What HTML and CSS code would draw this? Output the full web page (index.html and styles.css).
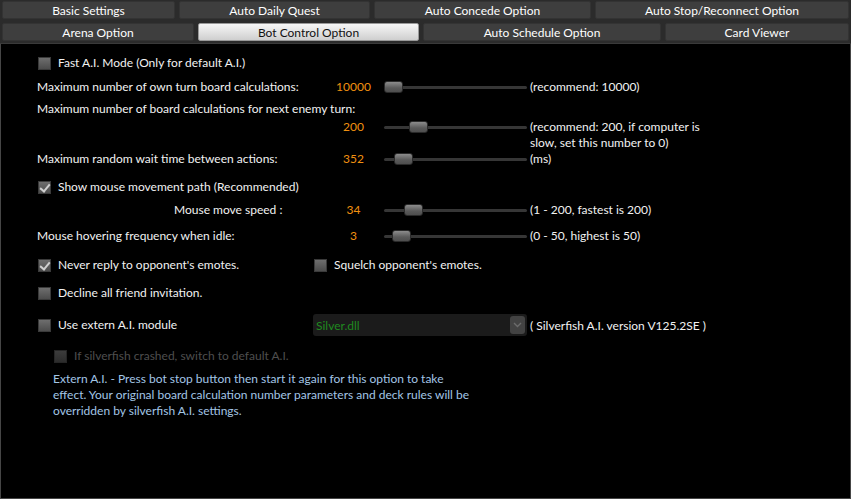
FILE: index.html
```html
<!DOCTYPE html>
<html lang="en">
<head>
  <meta charset="UTF-8">
  <title>Bot Control Option</title>
  <link rel="stylesheet" href="styles.css">
</head>
<body>
  <div class="window">
    <div class="tabs">
      <div class="tab-row">
        <div class="tab" style="width:173px">Basic Settings</div>
        <div class="tab" style="width:191px">Auto Daily Quest</div>
        <div class="tab" style="width:217px">Auto Concede Option</div>
        <div class="tab tab-last">Auto Stop/Reconnect Option</div>
      </div>
      <div class="tab-row">
        <div class="tab" style="width:192px">Arena Option</div>
        <div class="tab active" style="width:221px">Bot Control Option</div>
        <div class="tab" style="width:238px">Auto Schedule Option</div>
        <div class="tab tab-last">Card Viewer</div>
      </div>
    </div>

    <div class="panel">
      <label class="check row-fast"><span class="box"></span>Fast A.I. Mode (Only for default A.I.)</label>

      <div class="slider-row row-own">
        <span class="lbl">Maximum number of own turn board calculations:</span>
        <span class="val">10000</span>
        <span class="slider"><span class="thumb" style="left:0%"></span></span>
        <span class="note">(recommend: 10000)</span>
      </div>

      <div class="lbl-only">Maximum number of board calculations for next enemy turn:</div>
      <div class="slider-row row-enemy">
        <span class="lbl"></span>
        <span class="val">200</span>
        <span class="slider"><span class="thumb" style="left:17.5%"></span></span>
        <span class="note">(recommend: 200, if computer is<br>slow, set this number to 0)</span>
      </div>

      <div class="slider-row">
        <span class="lbl">Maximum random wait time between actions:</span>
        <span class="val">352</span>
        <span class="slider"><span class="thumb" style="left:7%"></span></span>
        <span class="note">(ms)</span>
      </div>

      <label class="check checked row-show"><span class="box"></span>Show mouse movement path (Recommended)</label>

      <div class="slider-row row-speed">
        <span class="lbl lbl-indent">Mouse move speed :</span>
        <span class="val">34</span>
        <span class="slider"><span class="thumb" style="left:14%"></span></span>
        <span class="note">(1 - 200, fastest is 200)</span>
      </div>

      <div class="slider-row row-hover">
        <span class="lbl">Mouse hovering frequency when idle:</span>
        <span class="val">3</span>
        <span class="slider"><span class="thumb" style="left:5.6%"></span></span>
        <span class="note">(0 - 50, highest is 50)</span>
      </div>

      <div class="pair row-never">
        <label class="check checked col-left"><span class="box"></span>Never reply to opponent's emotes.</label>
        <label class="check squelch"><span class="box"></span>Squelch opponent's emotes.</label>
      </div>

      <label class="check row-decline"><span class="box"></span>Decline all friend invitation.</label>

      <div class="pair row-extern">
        <label class="check col-left"><span class="box"></span>Use extern A.I. module</label>
        <div class="dropdown">
          <span class="dd-text">Silver.dll</span>
          <span class="dd-btn">
            <svg width="9" height="6" viewBox="0 0 9 6"><path d="M1 1 L4.5 4.5 L8 1" fill="none" stroke="#6c6c6c" stroke-width="1.4"/></svg>
          </span>
        </div>
        <span class="ver">( Silverfish A.I. version V125.2SE )</span>
      </div>

      <label class="check disabled row-crash"><span class="box"></span>If silverfish crashed, switch to default A.I.</label>

      <p class="info">Extern A.I. - Press bot stop button then start it again for this option to take effect. Your original board calculation number parameters and deck rules will be overridden by silverfish A.I. settings.</p>
    </div>
  </div>
</body>
</html>
```

FILE: styles.css
```css
body { margin: 0; background-color: #2b2b2b; font-family: Lato, "Liberation Sans", sans-serif; font-size: 12px; color: #f2f2f2; }
.window { width: 851px; height: 499px; display: flex; flex-direction: column; }

/* tab header */
.tabs { height: 44px; padding-top: 1px; box-sizing: border-box; border-bottom: 1px solid #3a3a3a; }
.tab-row { display: flex; gap: 4px; padding: 0 2px 0 2px; height: 18px; margin-bottom: 4px; }
.tab { height: 18px; line-height: 18px; text-align: center; background-color: #3e3e3e; border: 1px solid #333; border-radius: 2px; box-sizing: border-box; color: #fff; white-space: nowrap; }
.tab-last { flex: 1; }
.tab.active { background: linear-gradient(#f7f7f7, #cfcfcf); color: #111; border-color: #999; }

/* content */
.panel { flex: 1; background-color: #000; border: 1px solid #464646; border-top: none; padding: 11px 0 0 36px; }

.check { display: flex; align-items: center; height: 16px; line-height: 16px; white-space: nowrap; }
.box { width: 13px; height: 13px; margin: 0 7px 0 1px; box-sizing: border-box; border: 1px solid #3a3a3a; background: linear-gradient(#6e6e6e, #4c4c4c); position: relative; }
.checked .box::after { content: ""; position: absolute; left: 3px; top: 0px; width: 4px; height: 8px; border: solid #cfcfcf; border-width: 0 2px 2px 0; transform: rotate(40deg); }
.disabled { color: #4e4e4e; margin-left: 16px; }
.disabled .box { background: linear-gradient(#3c3c3c, #2c2c2c); border-color: #262626; }

.slider-row { display: flex; align-items: flex-start; line-height: 16px; }
.lbl { width: 294px; white-space: nowrap; }
.lbl-indent { padding-left: 137px; box-sizing: border-box; }
.val { width: 45px; text-align: center; color: #f09010; }
.slider { width: 143px; height: 16px; margin-left: 8px; position: relative; }
.slider::before { content: ""; position: absolute; left: 0; right: 0; top: 7px; height: 3px; border-radius: 2px; background-color: #363636; }
.thumb { position: absolute; top: 2px; width: 19px; height: 12px; box-sizing: border-box; border: 1px solid #2a2a2a; border-radius: 3px; background: linear-gradient(#8c8c8c, #5a5a5a 60%, #4e4e4e); }
.note { margin-left: 3px; white-space: nowrap; }

.lbl-only { line-height: 16px; }
.pair { display: flex; align-items: center; }
.col-left { width: 276px; }

.dropdown { width: 214px; height: 22px; box-sizing: border-box; background-color: #1b1b1b; border-radius: 3px; display: flex; align-items: center; justify-content: space-between; padding: 0 2px 0 3px; }
.dd-text { color: #1f8a1f; }
.dd-btn { width: 15px; height: 18px; background-color: #434343; border-radius: 3px; display: flex; align-items: center; justify-content: center; }
.ver { margin-left: 3px; white-space: nowrap; }

.info { width: 422px; margin: 7px 0 0 16px; line-height: 16px; color: #a3c6e6; }

/* vertical spacing between rows */
.row-fast { margin-top: 0; }
.row-own { margin-top: 8px; }
.lbl-only { margin-top: 6px; }
.row-enemy { margin-top: 2px; }
.row-show { margin-top: 12px; }
.row-speed { margin-top: 7px; }
.row-hover { margin-top: 10px; }
.row-never { margin-top: 13px; height: 16px; }
.row-decline { margin-top: 12px; }
.row-extern { margin-top: 13px; }
.row-crash { margin-top: 12px; }
```
